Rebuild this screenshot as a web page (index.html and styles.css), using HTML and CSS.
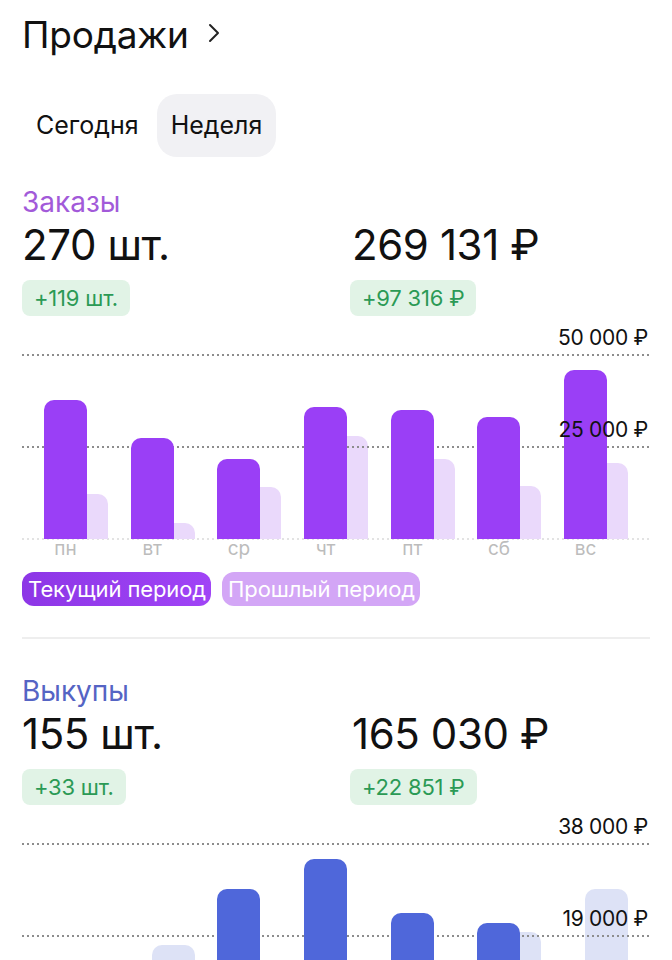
FILE: index.html
```html
<!DOCTYPE html>
<html lang="ru">
<head>
   <meta charset="UTF-8">
   <meta name="viewport" content="width=device-width, initial-scale=1.0">
   <title>Продажи</title>
   <link rel="stylesheet" href="styles.css">
</head>
<body>
   <header class="head">
      <h1 class="title">Продажи</h1>
      <svg class="chevron" width="12" height="20" viewBox="0 0 12 20">
         <path d="M2 2 L10 10 L2 18" fill="none" stroke="#222" stroke-width="2" stroke-linecap="round" stroke-linejoin="round"/>
      </svg>
   </header>
   <nav class="tabs">
      <span class="tab">Сегодня</span>
      <span class="tab tab-active">Неделя</span>
   </nav>

   <section class="block orders">
      <h2 class="block-title">Заказы</h2>
      <div class="stats">
         <div class="stat">
            <div class="stat-value">270 шт.</div>
            <span class="delta">+119 шт.</span>
         </div>
         <div class="stat">
            <div class="stat-value">269 131 ₽</div>
            <span class="delta">+97 316 ₽</span>
         </div>
      </div>
      <div class="chart">
         <div class="grid-line line-top"><span class="axis-label">50 000 ₽</span></div>
         <div class="grid-line line-mid"><span class="axis-label">25 000 ₽</span></div>
         <div class="grid-line line-bottom"></div>
         <div class="bars">
            <div class="day"><div class="bar bar-cur" style="height:75.5%"></div><div class="bar bar-prev" style="height:24.5%"></div><span class="day-label">пн</span></div>
            <div class="day"><div class="bar bar-cur" style="height:54.9%"></div><div class="bar bar-prev" style="height:8.7%"></div><span class="day-label">вт</span></div>
            <div class="day"><div class="bar bar-cur" style="height:43.5%"></div><div class="bar bar-prev" style="height:28.3%"></div><span class="day-label">ср</span></div>
            <div class="day"><div class="bar bar-cur" style="height:71.7%"></div><div class="bar bar-prev" style="height:56%"></div><span class="day-label">чт</span></div>
            <div class="day"><div class="bar bar-cur" style="height:70.1%"></div><div class="bar bar-prev" style="height:43.5%"></div><span class="day-label">пт</span></div>
            <div class="day"><div class="bar bar-cur" style="height:66.3%"></div><div class="bar bar-prev" style="height:28.8%"></div><span class="day-label">сб</span></div>
            <div class="day"><div class="bar bar-cur" style="height:91.8%"></div><div class="bar bar-prev" style="height:41.3%"></div><span class="day-label">вс</span></div>
         </div>
      </div>
      <div class="legend">
         <span class="pill pill-cur">Текущий период</span>
         <span class="pill pill-prev">Прошлый период</span>
      </div>
   </section>

   <hr class="divider">

   <section class="block buyouts">
      <h2 class="block-title">Выкупы</h2>
      <div class="stats">
         <div class="stat">
            <div class="stat-value">155 шт.</div>
            <span class="delta">+33 шт.</span>
         </div>
         <div class="stat">
            <div class="stat-value">165 030 ₽</div>
            <span class="delta">+22 851 ₽</span>
         </div>
      </div>
      <div class="chart">
         <div class="grid-line line-top"><span class="axis-label">38 000 ₽</span></div>
         <div class="grid-line line-mid"><span class="axis-label">19 000 ₽</span></div>
         <div class="grid-line line-bottom"></div>
         <div class="bars">
            <div class="day"><div class="bar bar-cur" style="height:18%"></div><div class="bar bar-prev" style="height:12%"></div><span class="day-label">пн</span></div>
            <div class="day"><div class="bar bar-cur" style="height:14%"></div><div class="bar bar-prev" style="height:45%"></div><span class="day-label">вт</span></div>
            <div class="day"><div class="bar bar-cur" style="height:75.8%"></div><div class="bar bar-prev" style="height:25%"></div><span class="day-label">ср</span></div>
            <div class="day"><div class="bar bar-cur" style="height:91.8%"></div><div class="bar bar-prev" style="height:20%"></div><span class="day-label">чт</span></div>
            <div class="day"><div class="bar bar-cur" style="height:62.6%"></div><div class="bar bar-prev" style="height:28%"></div><span class="day-label">пт</span></div>
            <div class="day"><div class="bar bar-cur" style="height:57.1%"></div><div class="bar bar-prev" style="height:52.2%"></div><span class="day-label">сб</span></div>
            <div class="day"><div class="bar bar-cur" style="height:22%"></div><div class="bar bar-prev" style="height:75.3%"></div><span class="day-label">вс</span></div>
         </div>
      </div>
      <div class="legend">
         <span class="pill pill-cur">Текущий период</span>
         <span class="pill pill-prev">Прошлый период</span>
      </div>
   </section>
</body>
</html>
```

FILE: styles.css
```css
:root {
   --text: #111;
   --purple: #9a3ff6;
   --purple-light: #ead9fb;
   --purple-pill: #d3a6f6;
   --blue: #4f67da;
   --blue-light: #dde2f6;
   --blue-pill: #a9b6ee;
   --green: #2b9a55;
   --green-bg: #e1f3e6;
}
* {
   box-sizing: border-box;
}
body {
   margin: 0;
   padding: 13px 22px 40px;
   background: #fff;
   color: var(--text);
   font-family: Inter, "Noto Sans", sans-serif;
}
.head {
   display: flex;
   align-items: center;
   gap: 19px;
}
.title {
   margin: 0;
   font-size: 37px;
   line-height: 44px;
   font-weight: 400;
   letter-spacing: -0.2px;
}
.chevron {
   margin-top: -4px;
}
.tabs {
   display: flex;
   gap: 4px;
   margin-top: 37px;
}
.tab {
   padding: 0 14px;
   height: 63px;
   line-height: 63px;
   font-size: 25px;
   border-radius: 20px;
}
.tab-active {
   background: #f1f1f4;
}

.block-title {
   margin: 29px 0 0;
   font-size: 28px;
   line-height: 32px;
   font-weight: 400;
}
.orders .block-title {
   color: #a25ad9;
}
.buyouts .block-title {
   margin-top: 0;
   color: #5564c4;
}
.stats {
   display: grid;
   grid-template-columns: 328px 1fr;
   margin-top: 2px;
}
.stat-value {
   font-size: 42px;
   line-height: 50px;
   letter-spacing: -0.4px;
}
.stat + .stat .stat-value {
   padding-left: 2px;
}
.delta {
   display: inline-block;
   margin-top: 10px;
   padding: 0 12px;
   height: 36px;
   line-height: 36px;
   font-size: 22px;
   letter-spacing: -0.2px;
   color: var(--green);
   background: var(--green-bg);
   border-radius: 8px;
}

/* chart */
.chart {
   position: relative;
   margin-top: 39px;
}
.grid-line {
   position: absolute;
   left: 0;
   right: 0;
   height: 2px;
   margin-top: -1px;
}
.grid-line::before {
   content: "";
   position: absolute;
   inset: 0;
   z-index: 1;
   background-image: repeating-linear-gradient(90deg, #8d8d8d 0 2px, transparent 2px 5px);
}
.line-top {
   top: 0;
}
.line-mid {
   top: 92px;
}
.line-bottom {
   top: 184px;
   opacity: 0.25;
}
.axis-label {
   position: absolute;
   right: 2px;
   bottom: 6px;
   z-index: 3;
   font-size: 21px;
   line-height: 24px;
   letter-spacing: -0.3px;
   color: #111;
}
.bars {
   display: flex;
   gap: 22.7px;
   padding-left: 22px;
}
.day {
   display: grid;
   grid-template-columns: 21px 22px 21px;
   grid-template-rows: 184px auto;
}
.bar {
   grid-row: 1;
   align-self: end;
   position: relative;
   border-radius: 10px 10px 0 0;
}
.bar-cur {
   grid-column: 1 / 3;
   z-index: 2;
}
.bar-prev {
   grid-column: 2 / 4;
   z-index: 0;
}
.orders .bar-cur {
   background: var(--purple);
}
.orders .bar-prev {
   background: var(--purple-light);
}
.buyouts .bar-cur {
   background: var(--blue);
}
.buyouts .bar-prev {
   background: var(--blue-light);
}
.day-label {
   grid-row: 2;
   grid-column: 1 / 3;
   text-align: center;
   font-size: 19px;
   line-height: 20px;
   color: #bcbcbc;
}

.legend {
   display: flex;
   gap: 11px;
   margin-top: 13px;
}
.pill {
   height: 34px;
   line-height: 34px;
   padding: 0 5px 0 6px;
   border-radius: 12px;
   font-size: 22px;
   letter-spacing: -0.1px;
   color: #fff;
}
.orders .pill-cur {
   background: linear-gradient(90deg, #8d36e6, #a044f6);
}
.orders .pill-prev {
   background: var(--purple-pill);
}
.buyouts .pill-cur {
   background: var(--blue);
}
.buyouts .pill-prev {
   background: var(--blue-pill);
}
.divider {
   margin: 31px 0 36px;
   border: 0;
   height: 2px;
   background: #eeeeee;
}
```
